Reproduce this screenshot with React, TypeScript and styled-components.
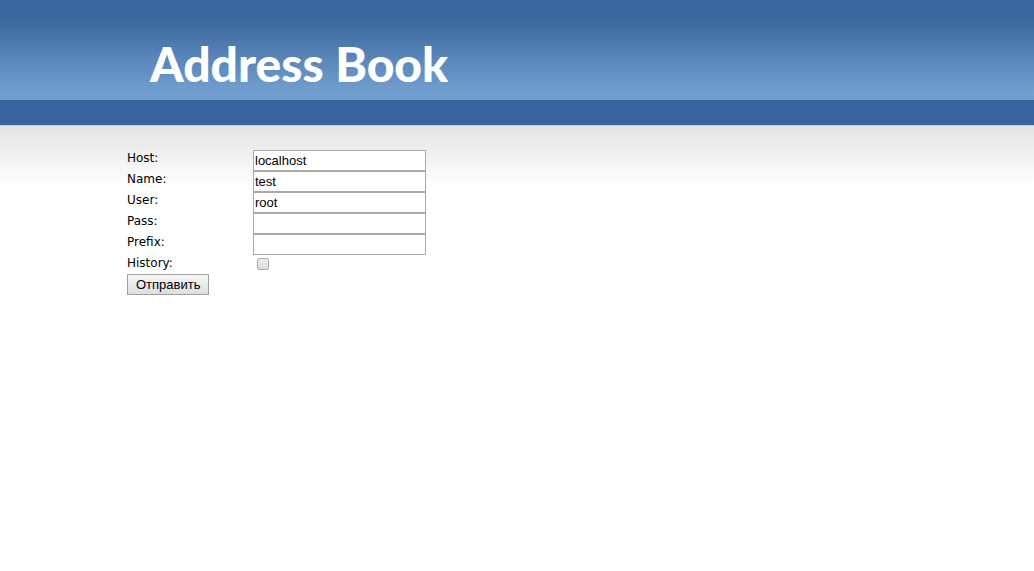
import React from 'react';
import styled, { createGlobalStyle } from 'styled-components';

const GlobalStyle = createGlobalStyle`
  * { box-sizing: border-box; }
  body {
    margin: 0;
    background: #fff;
    color: #000;
    font: 12px/17px Verdana, 'DejaVu Sans', sans-serif;
  }
`;

const Header = styled.header`
  height: 100px;
  padding: 32px 0 0 150px;
  background: linear-gradient(#3d689f 0, #3d689f 20px, #739ed0 92px, #739ed0 100px);
`;

const Logo = styled.h1`
  margin: 0;
  color: #fff;
  font: 900 48px/64px Lato, sans-serif;
  white-space: nowrap;
`;

const NavBar = styled.nav`
  height: 25px;
  background: #3a649e;
`;

const Content = styled.main`
  padding: 24px 0 0 127px;
  border-top: 1px solid #c9ced6;
  background: linear-gradient(#e3e3e3, #fff 60px);
`;

const Field = styled.div`
  display: flex;
  height: 21px;
`;

const Label = styled.label`
  width: 126px;
`;

const TextInput = styled.input`
  width: 173px;
  height: 21px;
  padding: 1px;
  border: 1px solid #a9a9a9;
  border-radius: 0;
  background: #fff;
  color: #000;
  font: 13px/15px Arial, 'Liberation Sans', sans-serif;
`;

const CheckBox = styled.input`
  appearance: none;
  width: 12px;
  height: 12px;
  margin: 3px 4px;
  border: 1px solid #acacac;
  border-radius: 2px;
  background: linear-gradient(#ededed, #dcdcdc);
`;

const SubmitButton = styled.button`
  display: block;
  height: 21px;
  margin-top: -2px;
  padding: 0 8px;
  border: 1px solid #a0a0a0;
  border-radius: 0;
  background: linear-gradient(#f6f6f6, #dddddd);
  color: #000;
  font: 13px/19px Arial, 'Liberation Sans', sans-serif;
`;

const fields = [
  { id: 'host', label: 'Host:', value: 'localhost' },
  { id: 'name', label: 'Name:', value: 'test' },
  { id: 'user', label: 'User:', value: 'root' },
  { id: 'pass', label: 'Pass:', value: '' },
  { id: 'prefix', label: 'Prefix:', value: '' },
];

export default function App() {
  return (
    <>
      <GlobalStyle />
      <Header>
        <Logo>Address Book</Logo>
      </Header>
      <NavBar />
      <Content>
        <form onSubmit={(e) => e.preventDefault()}>
          {fields.map((f) => (
            <Field key={f.id}>
              <Label htmlFor={f.id}>{f.label}</Label>
              <TextInput id={f.id} name={f.id} type="text" defaultValue={f.value} />
            </Field>
          ))}
          <Field>
            <Label htmlFor="history">History:</Label>
            <CheckBox id="history" name="history" type="checkbox" />
          </Field>
          <SubmitButton type="submit">Отправить</SubmitButton>
        </form>
      </Content>
    </>
  );
}
